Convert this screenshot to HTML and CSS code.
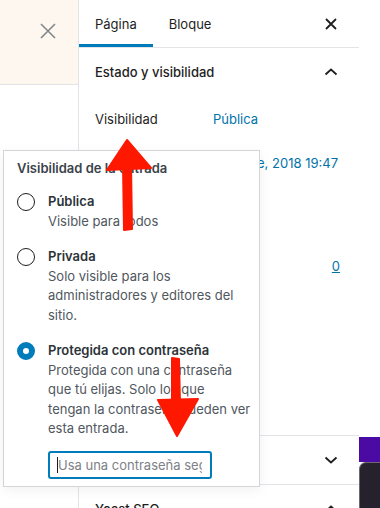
FILE: index.html
```html
<!DOCTYPE html>
<html lang="es">
<head>
<meta charset="utf-8">
<title>Editor</title>
<link rel="stylesheet" href="styles.css">
</head>
<body>
<div class="app">
  <aside class="left">
    <div class="left-top">
      <svg class="close-lg" width="16" height="16" viewBox="0 0 16 16"><path d="M1 1L15 15M15 1L1 15" stroke="#82878c" stroke-width="1.6" fill="none"/></svg>
    </div>
  </aside>
  <section class="sidebar">
    <div class="tabs">
      <button class="tab active">Página</button>
      <button class="tab">Bloque</button>
      <button class="icon-btn"><svg width="24" height="24" viewBox="0 0 24 24"><path d="M7 7L17 17M17 7L7 17" stroke="#1e1e1e" stroke-width="1.8" fill="none"/></svg></button>
    </div>
    <div class="panel">
      <div class="panel-head"><span>Estado y visibilidad</span><svg width="24" height="24" viewBox="0 0 24 24"><path d="M6.5 14.5L12 9.5L17.5 14.5" stroke="#1e1e1e" stroke-width="1.8" fill="none"/></svg></div>
      <div class="panel-body">
        <div class="row"><span class="label">Visibilidad</span><a class="value">Pública</a></div>
        <div class="row"><span class="label short">Publicar</span><a class="value right">18 de noviembre, 2018 19:47</a></div>
        <div class="row"><span class="label">Fijar en portada</span></div>
        <div class="row rev"><span class="label">Revisiones</span><a class="value right link">0</a></div>
      </div>
    </div>
    <div class="panel">
      <div class="panel-head"><span>Enlace permanente</span><svg width="24" height="24" viewBox="0 0 24 24"><path d="M6.5 9.5L12 14.5L17.5 9.5" stroke="#1e1e1e" stroke-width="1.8" fill="none"/></svg></div>
    </div>
    <div class="panel">
      <div class="panel-head"><span>Yoast SEO</span><svg width="24" height="24" viewBox="0 0 24 24"><path d="M6.5 14.5L12 9.5L17.5 14.5" stroke="#1e1e1e" stroke-width="1.8" fill="none"/></svg></div>
    </div>
  </section>
  <div class="strip">
    <div class="purple"></div>
    <div class="dark"></div>
  </div>
</div>

<div class="popover">
  <div class="legend">Visibilidad de la entrada</div>
  <div class="options">
    <label class="option">
      <span class="radio"></span>
      <span class="opt-text"><span class="opt-title">Pública</span><span class="opt-desc">Visible para todos</span></span>
    </label>
    <label class="option">
      <span class="radio"></span>
      <span class="opt-text"><span class="opt-title">Privada</span><span class="opt-desc">Solo visible para los<br>administradores y editores del<br>sitio.</span></span>
    </label>
    <label class="option">
      <span class="radio checked"></span>
      <span class="opt-text"><span class="opt-title">Protegida con contraseña</span><span class="opt-desc">Protegida con una contraseña<br>que tú elijas. Solo los que<br>tengan la contraseña pueden ver<br>esta entrada.</span></span>
    </label>
  </div>
  <div class="pw-wrap"><input class="pw" type="text" placeholder="Usa una contraseña segura"><span class="caret"></span></div>
</div>

<svg class="arrows" width="380" height="508" viewBox="0 0 380 508">
  <g fill="#ff1800" stroke="#ff1800" stroke-width="2" stroke-linejoin="round">
    <polygon points="127,140 107,170 151,168"/>
    <polygon points="123,165 131,165 132,229 124,230"/>
    <polygon points="172,358 179,359 180,404 172,404"/>
    <polygon points="158,400 198,399 177,436"/>
  </g>
</svg>
</body>
</html>
```
FILE: styles.css
```css
* { box-sizing: border-box; }
body {
  margin: 0;
  width: 380px;
  height: 508px;
  overflow: hidden;
  position: relative;
  background: #fff;
  font-family: Inter, "Noto Sans", sans-serif;
  font-size: 13px;
  color: #1e1e1e;
}
.app { display: flex; height: 508px; overflow: hidden; }
.left { width: 79px; flex: none; border-right: 1px solid #e2e4e7; }
.left-top {
  height: 85px;
  background: #fdf7ef;
  border-bottom: 1px solid #e2e4e7;
  padding: 23px 0 0 40px;
}
.close-lg { display: block; }
.sidebar { width: 280px; flex: none; }
.tabs {
  display: flex;
  height: 48px;
  border-bottom: 1px solid #e2e4e7;
  padding-right: 16px;
}
.tab {
  font: inherit;
  color: #1e1e1e;
  background: none;
  border: 0;
  padding: 0 16px;
  height: 47px;
}
.tab.active { box-shadow: inset 0 -3px #007cba; }
.icon-btn {
  margin-left: auto;
  background: none;
  border: 0;
  padding: 0;
  width: 24px;
  align-self: center;
  height: 24px;
}
.icon-btn svg, .panel-head svg { display: block; }
.panel { border-bottom: 1px solid #e2e4e7; }
.panel-head {
  height: 48px;
  display: flex;
  align-items: center;
  justify-content: space-between;
  padding: 0 16px;
  font-weight: 500;
}
.panel-body {
  height: 339px;
  padding: 8px 16px 0;
  display: flex;
  flex-direction: column;
  gap: 14px;
}
.row { height: 30px; display: flex; align-items: center; }
.label { width: 118px; flex: none; }
.label.short { width: auto; }
.value { color: #0073aa; white-space: nowrap; }
.value.right { margin-left: auto; margin-right: 5px; }
.value.link { text-decoration: underline; margin-right: 3px; }
.rev { margin-top: 15px; }
.strip { width: 21px; flex: none; padding-top: 437px; display: flex; flex-direction: column; }
.purple { height: 25px; background: #4a0aa3; }
.dark { flex: 1; background: #26222d; border-top-left-radius: 7px; border-top: 1px solid #6b6872; border-left: 1px solid #6b6872; }

.popover {
  position: absolute;
  left: 3px;
  top: 150px;
  width: 257px;
  height: 337px;
  background: #fff;
  border: 1px solid #d3d5d8;
  box-shadow: 0 3px 12px rgba(0, 0, 0, 0.06);
  padding: 9px 12px 0 13px;
  color: #32373c;
}
.legend { font-weight: 600; line-height: 16px; color: #3c434a; margin-bottom: 16px; }
.options { display: flex; flex-direction: column; gap: 16px; }
.option { display: flex; gap: 13px; line-height: 19.5px; }
.radio {
  width: 18px; height: 18px; flex: none;
  border: 1.5px solid #1e1e1e;
  border-radius: 50%;
  margin-top: 1px;
}
.radio.checked { border: 6px solid #007cba; background: #fff; }
.opt-text { display: flex; flex-direction: column; width: 199px; }
.opt-title { font-weight: 600; color: #2c3338; }
.opt-desc { color: #50575e; white-space: nowrap; }
.pw-wrap { position: relative; margin: 12px 0 0 31px; width: 164px; }
.pw {
  display: block;
  width: 164px;
  height: 28px;
  font: inherit;
  border: 2px solid #007cba;
  border-radius: 3px;
  padding: 0 8px;
  outline: none;
}
.pw::placeholder { color: #7e8187; }
.caret { position: absolute; left: 9px; top: 6px; width: 1px; height: 16px; background: #1e1e1e; }
.arrows { position: absolute; left: 0; top: 0; pointer-events: none; }
```
